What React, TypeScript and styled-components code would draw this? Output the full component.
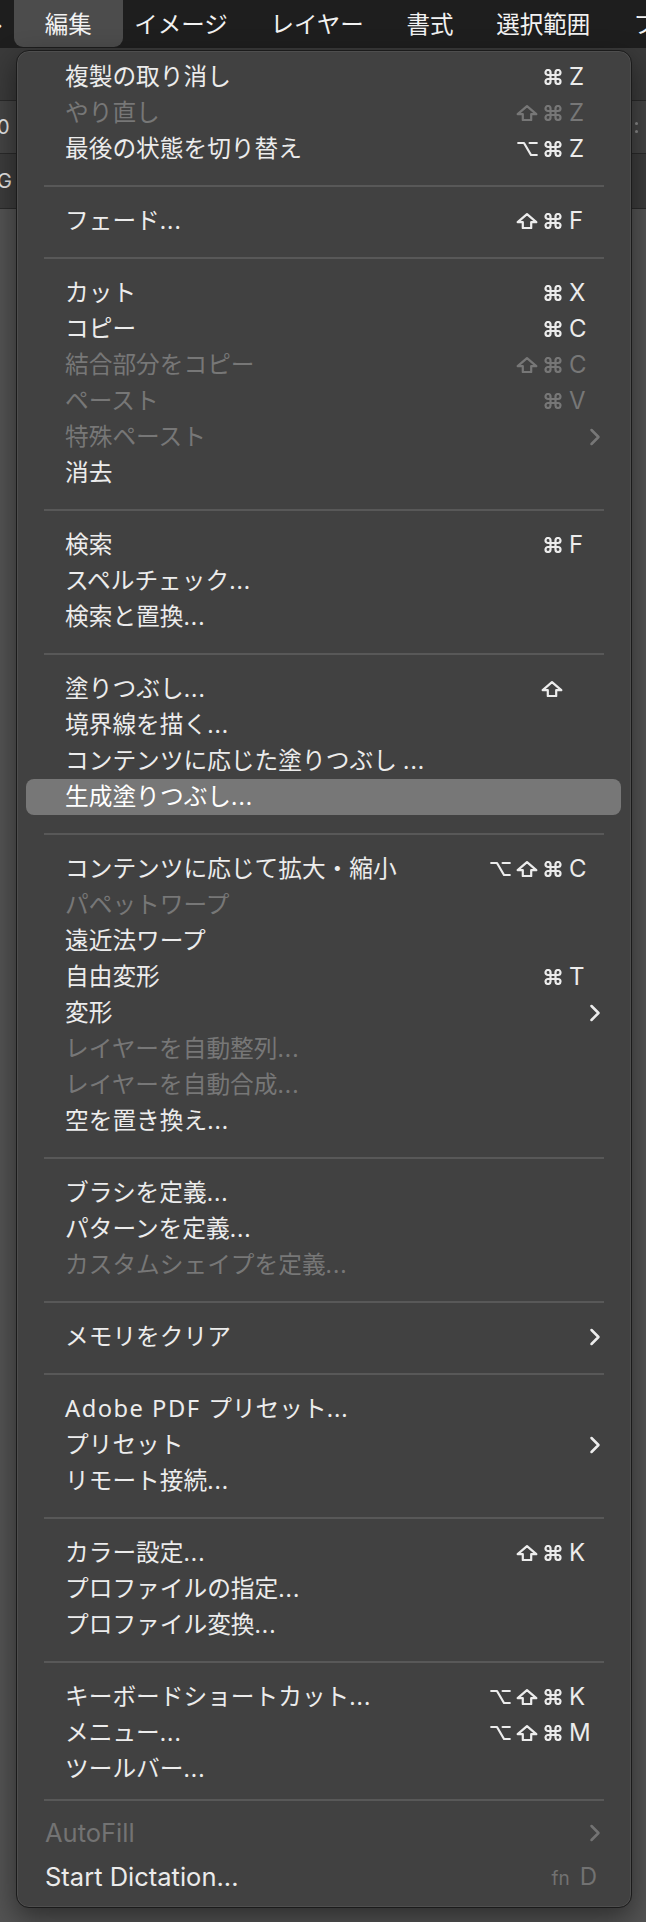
import { FC } from 'react';
import styled, { createGlobalStyle, css } from 'styled-components';

type Mod = 'opt' | 'shift' | 'cmd';

interface MenuItem {
  label: string;
  mods?: Mod[];
  keyName?: string;
  disabled?: boolean;
  submenu?: boolean;
  highlighted?: boolean;
}

const GROUPS: MenuItem[][] = [
  [
    { label: '複製の取り消し', mods: ['cmd'], keyName: 'Z' },
    { label: 'やり直し', mods: ['shift', 'cmd'], keyName: 'Z', disabled: true },
    { label: '最後の状態を切り替え', mods: ['opt', 'cmd'], keyName: 'Z' },
  ],
  [{ label: 'フェード...', mods: ['shift', 'cmd'], keyName: 'F' }],
  [
    { label: 'カット', mods: ['cmd'], keyName: 'X' },
    { label: 'コピー', mods: ['cmd'], keyName: 'C' },
    { label: '結合部分をコピー', mods: ['shift', 'cmd'], keyName: 'C', disabled: true },
    { label: 'ペースト', mods: ['cmd'], keyName: 'V', disabled: true },
    { label: '特殊ペースト', submenu: true, disabled: true },
    { label: '消去' },
  ],
  [
    { label: '検索', mods: ['cmd'], keyName: 'F' },
    { label: 'スペルチェック...' },
    { label: '検索と置換...' },
  ],
  [
    { label: '塗りつぶし...', mods: ['shift'] },
    { label: '境界線を描く...' },
    { label: 'コンテンツに応じた塗りつぶし ...' },
    { label: '生成塗りつぶし...', highlighted: true },
  ],
  [
    { label: 'コンテンツに応じて拡大・縮小', mods: ['opt', 'shift', 'cmd'], keyName: 'C' },
    { label: 'パペットワープ', disabled: true },
    { label: '遠近法ワープ' },
    { label: '自由変形', mods: ['cmd'], keyName: 'T' },
    { label: '変形', submenu: true },
    { label: 'レイヤーを自動整列...', disabled: true },
    { label: 'レイヤーを自動合成...', disabled: true },
    { label: '空を置き換え...' },
  ],
  [
    { label: 'ブラシを定義...' },
    { label: 'パターンを定義...' },
    { label: 'カスタムシェイプを定義...', disabled: true },
  ],
  [{ label: 'メモリをクリア', submenu: true }],
  [
    { label: 'Adobe PDF プリセット...' },
    { label: 'プリセット', submenu: true },
    { label: 'リモート接続...' },
  ],
  [
    { label: 'カラー設定...', mods: ['shift', 'cmd'], keyName: 'K' },
    { label: 'プロファイルの指定...' },
    { label: 'プロファイル変換...' },
  ],
  [
    { label: 'キーボードショートカット...', mods: ['opt', 'shift', 'cmd'], keyName: 'K' },
    { label: 'メニュー...', mods: ['opt', 'shift', 'cmd'], keyName: 'M' },
    { label: 'ツールバー...' },
  ],
];

const MENU_TITLES = ['ファイル', '編集', 'イメージ', 'レイヤー', '書式', '選択範囲', 'フィルター'];

const GlobalStyle = createGlobalStyle`
  html, body {
    margin: 0;
    padding: 0;
    background: #535353;
  }
  body {
    font-family: "Noto Sans", "Noto Sans CJK JP", sans-serif;
    -webkit-font-smoothing: antialiased;
  }
`;

const Page = styled.div`
  position: relative;
  width: 646px;
  height: 1922px;
  overflow: hidden;
  display: flex;
  flex-direction: column;
  background: #535353;
`;

const MenuBar = styled.nav`
  flex: none;
  height: 48px;
  display: flex;
  background: #1e1e1e;
  overflow: hidden;
`;

const MenuTitles = styled.div`
  display: flex;
  margin-left: -113px;
  padding-bottom: 1px;
`;

const MenuTitle = styled.div<{ $active?: boolean }>`
  display: flex;
  align-items: center;
  padding: 0 21.4px 2px;
  font-size: 23.5px;
  color: #f2f2f2;
  white-space: nowrap;

  ${({ $active }) =>
    $active &&
    css`
      margin: 0 -10px;
      padding: 0 31px 2px;
      background: #4c4c4c;
      border-radius: 0 0 9px 9px;
    `}
`;

const OptionsRow = styled.div<{ $height: number; $bg: string }>`
  flex: none;
  height: ${({ $height }) => $height}px;
  display: flex;
  align-items: center;
  justify-content: space-between;
  background: ${({ $bg }) => $bg};
  border-bottom: 1px solid #2a2a2a;
`;

const FieldText = styled.span`
  margin-left: -3px;
  font-family: "Inter", "Noto Sans", sans-serif;
  font-size: 20px;
  color: #e8e8e8;
`;

const Grip = styled.div`
  display: flex;
  flex-direction: column;
  gap: 5px;
  margin-right: 8px;

  &::before,
  &::after {
    content: '';
    width: 3px;
    height: 3px;
    border-radius: 50%;
    background: #8a8a8a;
  }
`;

const Workspace = styled.div`
  flex: 1;
  background: #535353;
`;

const Dropdown = styled.div`
  position: absolute;
  top: 50px;
  left: 16px;
  width: 616px;
  box-sizing: border-box;
  padding: 8px 10px 8px 9px;
  display: flex;
  flex-direction: column;
  background: #414141;
  border: 1px solid #1b1b1b;
  border-radius: 13px;
  box-shadow: inset 0 0 0 1px rgba(255, 255, 255, 0.07), 0 10px 28px rgba(0, 0, 0, 0.45);
`;

const Row = styled.div<{ $disabled?: boolean; $highlighted?: boolean }>`
  height: 36px;
  display: flex;
  align-items: center;
  padding: 0 20px 0 39px;
  border-radius: 8px;
  color: ${({ $disabled }) => ($disabled ? '#777777' : '#ececec')};
  background: ${({ $highlighted }) => ($highlighted ? '#777777' : 'transparent')};
  ${({ $highlighted }) => $highlighted && 'color: #ffffff;'}
`;

const Label = styled.span`
  flex: 1;
  font-size: 23.7px;
  white-space: nowrap;
  line-height: 1;
`;

const Latin = styled.span`
  letter-spacing: 1.5px;
`;

const Dots = styled.span`
  letter-spacing: 1px;
`;

const Separator = styled.div<{ $height: number }>`
  height: ${({ $height }) => $height}px;
  display: flex;
  align-items: center;
  padding: 2px 17px 0 18px;
  box-sizing: border-box;

  &::after {
    content: '';
    flex: 1;
    height: 2px;
    background: #585858;
  }
`;

const Shortcut = styled.div`
  display: flex;
  align-items: center;
  gap: 6px;
  margin-right: 11px;
`;

const Mods = styled.div`
  display: flex;
  align-items: center;
  gap: 5px;
`;

const KeyCap = styled.span`
  width: 21px;
  font-family: "Inter", "Liberation Sans", sans-serif;
  font-size: 24px;
  line-height: 1;
`;

const SystemRow = styled.div<{ $disabled?: boolean }>`
  height: 44px;
  display: flex;
  align-items: center;
  padding: 0 20px 0 19px;
  color: ${({ $disabled }) => ($disabled ? '#737373' : '#ebebeb')};
`;

const SystemLabel = styled.span`
  flex: 1;
  font-family: "Inter", "Liberation Sans", sans-serif;
  font-size: 25.5px;
  line-height: 1;
`;

const FnHint = styled.span`
  display: flex;
  align-items: baseline;
  gap: 10px;
  margin-right: 4px;
  font-family: "Inter", "Liberation Sans", sans-serif;
  color: #727272;
  line-height: 1;
`;

const FnSmall = styled.span`
  font-size: 19px;
`;

const FnKey = styled.span`
  font-size: 24px;
`;

const Glyph = styled.svg`
  display: block;
  fill: none;
  stroke: currentColor;
  stroke-width: 2.2;
  stroke-linecap: round;
  stroke-linejoin: round;
`;

const CmdIcon: FC = () => (
  <Glyph width="20" height="16" viewBox="0 0 20 16">
    <path d="M12.5 3.5V12.5A2.5 2.5 0 1 0 15 10H5A2.5 2.5 0 1 0 7.5 12.5V3.5A2.5 2.5 0 1 0 5 6H15A2.5 2.5 0 1 0 12.5 3.5Z" />
  </Glyph>
);

const ShiftIcon: FC = () => (
  <Glyph width="22" height="16" viewBox="0 0 22 16">
    <path d="M11 1.2L20.3 9.2H15.2V15H6.8V9.2H1.7Z" />
  </Glyph>
);

const OptIcon: FC = () => (
  <Glyph width="21" height="16" viewBox="0 0 21 16">
    <path d="M1.2 2H7L14 14H19.8" />
    <path d="M12.6 2H19.8" />
  </Glyph>
);

const Chevron: FC = () => (
  <Glyph width="12" height="18" viewBox="0 0 12 18" style={{ strokeWidth: 2.5 }}>
    <path d="M2.5 2L9.5 9L2.5 16" />
  </Glyph>
);

const MOD_ICONS: Record<Mod, FC> = {
  opt: OptIcon,
  shift: ShiftIcon,
  cmd: CmdIcon,
};

const ItemLabel: FC<{ text: string }> = ({ text }) => {
  const hasDots = text.endsWith('...');
  const body = hasDots ? text.slice(0, -3) : text;
  const latinMatch = body.match(/^([A-Za-z ]+)(.*)$/);

  return (
    <Label>
      {latinMatch ? (
        <>
          <Latin>{latinMatch[1]}</Latin>
          {latinMatch[2]}
        </>
      ) : (
        body
      )}
      {hasDots && <Dots>...</Dots>}
    </Label>
  );
};

const MenuRow: FC<{ item: MenuItem }> = ({ item }) => (
  <Row $disabled={item.disabled} $highlighted={item.highlighted}>
    <ItemLabel text={item.label} />
    {item.mods && (
      <Shortcut>
        <Mods>
          {item.mods.map((m) => {
            const Icon = MOD_ICONS[m];
            return <Icon key={m} />;
          })}
        </Mods>
        <KeyCap>{item.keyName}</KeyCap>
      </Shortcut>
    )}
    {item.submenu && <Chevron />}
  </Row>
);

export default function App() {
  return (
    <>
      <GlobalStyle />
      <Page>
        <MenuBar>
          <MenuTitles>
            {MENU_TITLES.map((t) => (
              <MenuTitle key={t} $active={t === '編集'}>
                {t}
              </MenuTitle>
            ))}
          </MenuTitles>
        </MenuBar>

        <OptionsRow $height={52} $bg="#3a3a3a">
          <span />
        </OptionsRow>
        <OptionsRow $height={52} $bg="#444444">
          <FieldText>0</FieldText>
          <Grip />
        </OptionsRow>
        <OptionsRow $height={54} $bg="#3c3c3c">
          <FieldText>G</FieldText>
        </OptionsRow>
        <Workspace />

        <Dropdown>
          {GROUPS.map((group, gi) => (
            <div key={gi}>
              {gi > 0 && <Separator $height={36} />}
              {group.map((item) => (
                <MenuRow key={item.label} item={item} />
              ))}
            </div>
          ))}
          <Separator $height={24} />
          <SystemRow $disabled>
            <SystemLabel>AutoFill</SystemLabel>
            <Chevron />
          </SystemRow>
          <SystemRow>
            <SystemLabel>Start Dictation...</SystemLabel>
            <FnHint>
              <FnSmall>fn</FnSmall>
              <FnKey>D</FnKey>
            </FnHint>
          </SystemRow>
        </Dropdown>
      </Page>
    </>
  );
}
